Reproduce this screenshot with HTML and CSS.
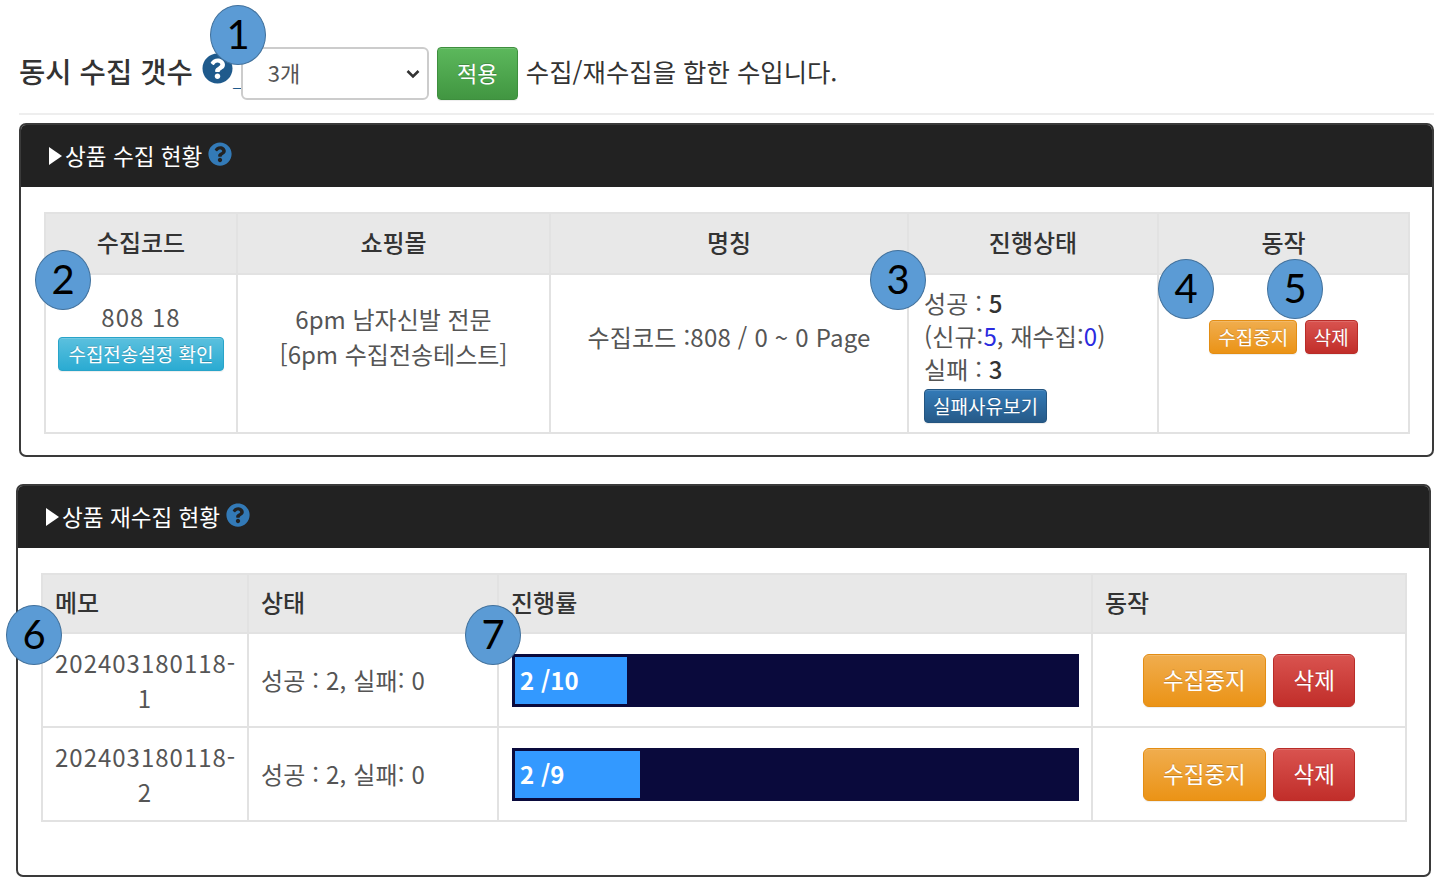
FILE: index.html
```html
<!DOCTYPE html>
<html lang="ko">
<head>
  <meta charset="UTF-8">
  <meta name="viewport" content="width=device-width, initial-scale=1.0">
  <title>상품 수집 현황</title>
  <link rel="stylesheet" href="styles.css">
</head>
<body>
  <svg class="icon-defs" width="0" height="0">
    <symbol id="question" viewBox="0 0 512 512">
      <path d="M504 256c0 136.997-111.043 248-248 248S8 392.997 8 256C8 119.083 119.043 8 256 8s248 111.083 248 248zM262.655 90c-54.497 0-89.255 22.957-116.549 63.758-3.536 5.286-2.353 12.415 2.715 16.258l34.699 26.31c5.205 3.947 12.621 3.008 16.665-2.122 17.864-22.658 30.113-35.797 57.303-35.797 20.429 0 45.698 13.148 45.698 32.958 0 14.976-12.363 22.667-32.534 33.976C247.128 238.528 216 254.941 216 296v4c0 6.627 5.373 12 12 12h56c6.627 0 12-5.373 12-12v-1.333c0-28.462 83.186-29.647 83.186-106.667 0-58.002-60.165-102-116.531-102zM256 338c-25.365 0-46 20.635-46 46 0 25.364 20.635 46 46 46s46-20.636 46-46c0-25.365-20.635-46-46-46z"/>
    </symbol>
  </svg>

  <div class="page">
    <div class="top-row">
      <span class="top-title">동시 수집 갯수</span>
      <svg class="help help-top"><use href="#question"/></svg>
      <span class="underscore">_</span>
      <select class="count-select">
        <option>3개</option>
      </select>
      <button class="btn btn-success btn-apply">적용</button>
      <span class="top-note">수집/재수집을 합한 수입니다.</span>
    </div>
    <hr class="divider">

    <section class="panel panel-collect">
      <div class="panel-head">
        <span class="arrow"></span>
        <span>상품 수집 현황</span>
        <svg class="help help-panel"><use href="#question"/></svg>
      </div>
      <div class="panel-body">
        <table class="grid collect-table">
          <colgroup>
            <col class="c1"><col class="c2"><col class="c3"><col class="c4"><col class="c5">
          </colgroup>
          <thead>
            <tr>
              <th>수집코드</th>
              <th>쇼핑몰</th>
              <th>명칭</th>
              <th>진행상태</th>
              <th>동작</th>
            </tr>
          </thead>
          <tbody>
            <tr>
              <td>
                <div class="code">808 18</div>
                <button class="btn btn-info btn-sm">수집전송설정 확인</button>
              </td>
              <td>6pm 남자신발 전문<br>[6pm 수집전송테스트]</td>
              <td class="range">수집코드 :808 / 0 ~ 0 Page</td>
              <td class="status-cell">
                <div>성공 : <b>5</b></div>
                <div>(신규:<span class="num">5</span>, 재수집:<span class="num">0</span>)</div>
                <div>실패 : <b>3</b></div>
                <button class="btn btn-primary btn-sm">실패사유보기</button>
              </td>
              <td class="action-cell">
                <button class="btn btn-warning btn-sm">수집중지</button>
                <button class="btn btn-danger btn-sm">삭제</button>
              </td>
            </tr>
          </tbody>
        </table>
      </div>
    </section>

    <section class="panel panel-recollect">
      <div class="panel-head">
        <span class="arrow"></span>
        <span>상품 재수집 현황</span>
        <svg class="help help-panel"><use href="#question"/></svg>
      </div>
      <div class="panel-body">
        <table class="grid recollect-table">
          <colgroup>
            <col class="r1"><col class="r2"><col class="r3"><col class="r4">
          </colgroup>
          <thead>
            <tr>
              <th>메모</th>
              <th>상태</th>
              <th>진행률</th>
              <th>동작</th>
            </tr>
          </thead>
          <tbody>
            <tr>
              <td class="memo">202403180118-1</td>
              <td class="state">성공 : 2, 실패: 0</td>
              <td class="bar-cell">
                <div class="progress"><div class="bar" style="width: 20%">2 /10</div></div>
              </td>
              <td class="actions">
                <button class="btn btn-warning btn-lg">수집중지</button>
                <button class="btn btn-danger btn-lg">삭제</button>
              </td>
            </tr>
            <tr>
              <td class="memo">202403180118-2</td>
              <td class="state">성공 : 2, 실패: 0</td>
              <td class="bar-cell">
                <div class="progress"><div class="bar" style="width: 22.2%">2 /9</div></div>
              </td>
              <td class="actions">
                <button class="btn btn-warning btn-lg">수집중지</button>
                <button class="btn btn-danger btn-lg">삭제</button>
              </td>
            </tr>
          </tbody>
        </table>
      </div>
    </section>

    <!-- numbered callouts -->
    <span class="mark mark-1">1</span>
    <span class="mark mark-2">2</span>
    <span class="mark mark-3">3</span>
    <span class="mark mark-4">4</span>
    <span class="mark mark-5">5</span>
    <span class="mark mark-6">6</span>
    <span class="mark mark-7">7</span>
  </div>
</body>
</html>
```

FILE: styles.css
```css
* {
  box-sizing: border-box;
}
body {
  margin: 0;
  background: #fff;
  color: #555;
  font-family: "Noto Sans CJK KR", "Noto Sans", sans-serif;
  font-size: 24px;
}
.icon-defs {
  position: absolute;
}
.page {
  position: relative;
  width: 1442px;
  height: 888px;
  overflow: hidden;
}

/* top row */
.top-row {
  display: flex;
  align-items: center;
  height: 53px;
  margin: 47px 0 0 19px;
}
.top-title {
  margin-bottom: 6px;
  font-size: 28.6px;
  font-weight: 500;
  color: #333;
  white-space: nowrap;
}
.top-note {
  margin: 0 0 5px 8px;
  font-size: 25.4px;
  color: #333;
  white-space: nowrap;
}
.underscore {
  width: 8px;
  font-size: 16px;
  color: #1f5a8c;
  align-self: flex-end;
  margin-bottom: 8px;
}
.help {
  fill: #337ab7;
}
.help-top {
  width: 31px;
  height: 31px;
  margin: -11px 0 0 9px;
  fill: #1f5a8c;
}
.help-panel {
  width: 24px;
  height: 24px;
  margin: -3px 0 0 6px;
}
.count-select {
  width: 188px;
  height: 53px;
  padding: 0 0 4px 25px;
  border: 2px solid #ccc;
  border-radius: 6px;
  background: #fff url("data:image/svg+xml,%3Csvg xmlns='http://www.w3.org/2000/svg' width='16' height='10'%3E%3Cpath d='M2.5 2l5.500 5.500L13.500 2' fill='none' stroke='%23333' stroke-width='2.6'/%3E%3C/svg%3E") no-repeat right 6px center;
  color: #555;
  font-family: inherit;
  font-size: 22px;
  appearance: none;
}
.divider {
  height: 2px;
  margin: 13px 8px 0 19px;
  border: 0;
  background: #eee;
}

/* panels */
.panel {
  border: 2px solid #3a3a3a;
  border-radius: 7px;
  overflow: hidden;
}
.panel-collect {
  height: 334px;
  margin: 8px 8px 0 19px;
}
.panel-recollect {
  height: 393px;
  margin: 27px 11px 0 16px;
}
.panel-head {
  display: flex;
  align-items: center;
  height: 62px;
  padding: 0 0 1px 28px;
  background: #222;
  color: #fff;
  font-size: 22.6px;
}
.arrow {
  width: 0;
  height: 0;
  margin-right: 3px;
  border-left: 13px solid #fff;
  border-top: 9px solid transparent;
  border-bottom: 9px solid transparent;
}
.panel-body {
  padding: 25px 24px 0 23px;
}

/* tables */
.grid {
  width: 100%;
  table-layout: fixed;
  border-collapse: collapse;
}
.grid th,
.grid td {
  border: 2px solid #e2e2e2;
}
.grid th {
  height: 61px;
  padding-bottom: 6px;
  background: #e8e8e8;
  color: #333;
  font-weight: 500;
}
.collect-table td {
  height: 159px;
  padding: 0 0 36px;
  text-align: center;
  line-height: 35px;
}
.collect-table td.range {
  padding-bottom: 34px;
  letter-spacing: .2px;
}
.collect-table td.status-cell {
  padding: 10px 15px 8px;
  text-align: left;
  line-height: 33px;
  letter-spacing: .1px;
}
.collect-table td.action-cell {
  padding-bottom: 38px;
}
.status-cell b {
  font-weight: 500;
  color: #333;
}
.status-cell .btn {
  margin-top: 2px;
}
.num {
  color: #2a2ae0;
}
.code {
  line-height: 33px;
  letter-spacing: 1px;
}
.c1 { width: 192px; }
.c2 { width: 313px; }
.c3 { width: 358px; }
.c4 { width: 250px; }
.c5 { width: 251px; }

.recollect-table th {
  height: 59px;
  padding: 0 0 4px 12px;
  text-align: left;
}
.recollect-table td {
  height: 94px;
  padding: 0 12px;
  line-height: 35px;
}
.recollect-table td.memo {
  text-align: center;
  letter-spacing: 1px;
}
.recollect-table td.state {
  padding-bottom: 2px;
  letter-spacing: .15px;
}
.recollect-table td.bar-cell {
  padding: 0 12px 0 13px;
}
.recollect-table td.actions {
  padding: 0;
  text-align: center;
}
.r1 { width: 206px; }
.r2 { width: 250px; }
.r3 { width: 594px; }
.r4 { width: 314px; }

/* progress */
.progress {
  height: 53px;
  border: 3px solid #0a0a3c;
  background: #0a0a3c;
}
.bar {
  height: 100%;
  padding-left: 5px;
  background: #39f;
  color: #fff;
  font-weight: 700;
  font-size: 24px;
  line-height: 45px;
}

/* buttons */
.btn {
  border: 1px solid transparent;
  color: #fff;
  font-family: inherit;
  text-shadow: 0 -1px 0 rgba(0,0,0,.2);
  box-shadow: inset 0 1px 0 rgba(255,255,255,.15), 0 1px 1px rgba(0,0,0,.075);
  vertical-align: middle;
}
.btn-sm {
  height: 34px;
  padding: 0 8px;
  border-radius: 4px;
  font-size: 19px;
  line-height: 30px;
}
.btn-sm + .btn-sm {
  margin-left: 1px;
}
.btn-lg {
  height: 53px;
  padding: 0 19.5px 3px;
  border-radius: 6px;
  font-size: 22.5px;
}
.btn-apply {
  width: 81px;
  height: 53px;
  margin-left: 8px;
  padding: 0 0 4px;
  border-radius: 4px;
  font-size: 22px;
}
.btn-success {
  background: linear-gradient(#5cb85c, #419641);
  border-color: #3e8f3e;
}
.btn-info {
  padding: 0 9.5px;
  background: linear-gradient(#5bc0de, #2aabd2);
  border-color: #28a4c9;
}
.btn-primary {
  background: linear-gradient(#337ab7, #265a88);
  border-color: #245580;
}
.btn-warning {
  background: linear-gradient(#f0ad4e, #eb9316);
  border-color: #e38d13;
}
.btn-danger {
  background: linear-gradient(#d9534f, #c12e2a);
  border-color: #b92c28;
}

/* callouts */
.mark {
  position: absolute;
  width: 56px;
  height: 60px;
  border: 1.5px solid #41719c;
  border-radius: 50%;
  background: #5b9bd5;
  color: #000;
  font-family: Lato, sans-serif;
  font-size: 40px;
  line-height: 57px;
  text-align: center;
}
.mark-1 { left: 210px; top: 5px; }
.mark-2 { left: 35px; top: 250px; }
.mark-3 { left: 870px; top: 250px; }
.mark-4 { left: 1158px; top: 259px; }
.mark-5 { left: 1267px; top: 259px; }
.mark-6 { left: 6px; top: 605px; }
.mark-7 { left: 465px; top: 605px; }
```
